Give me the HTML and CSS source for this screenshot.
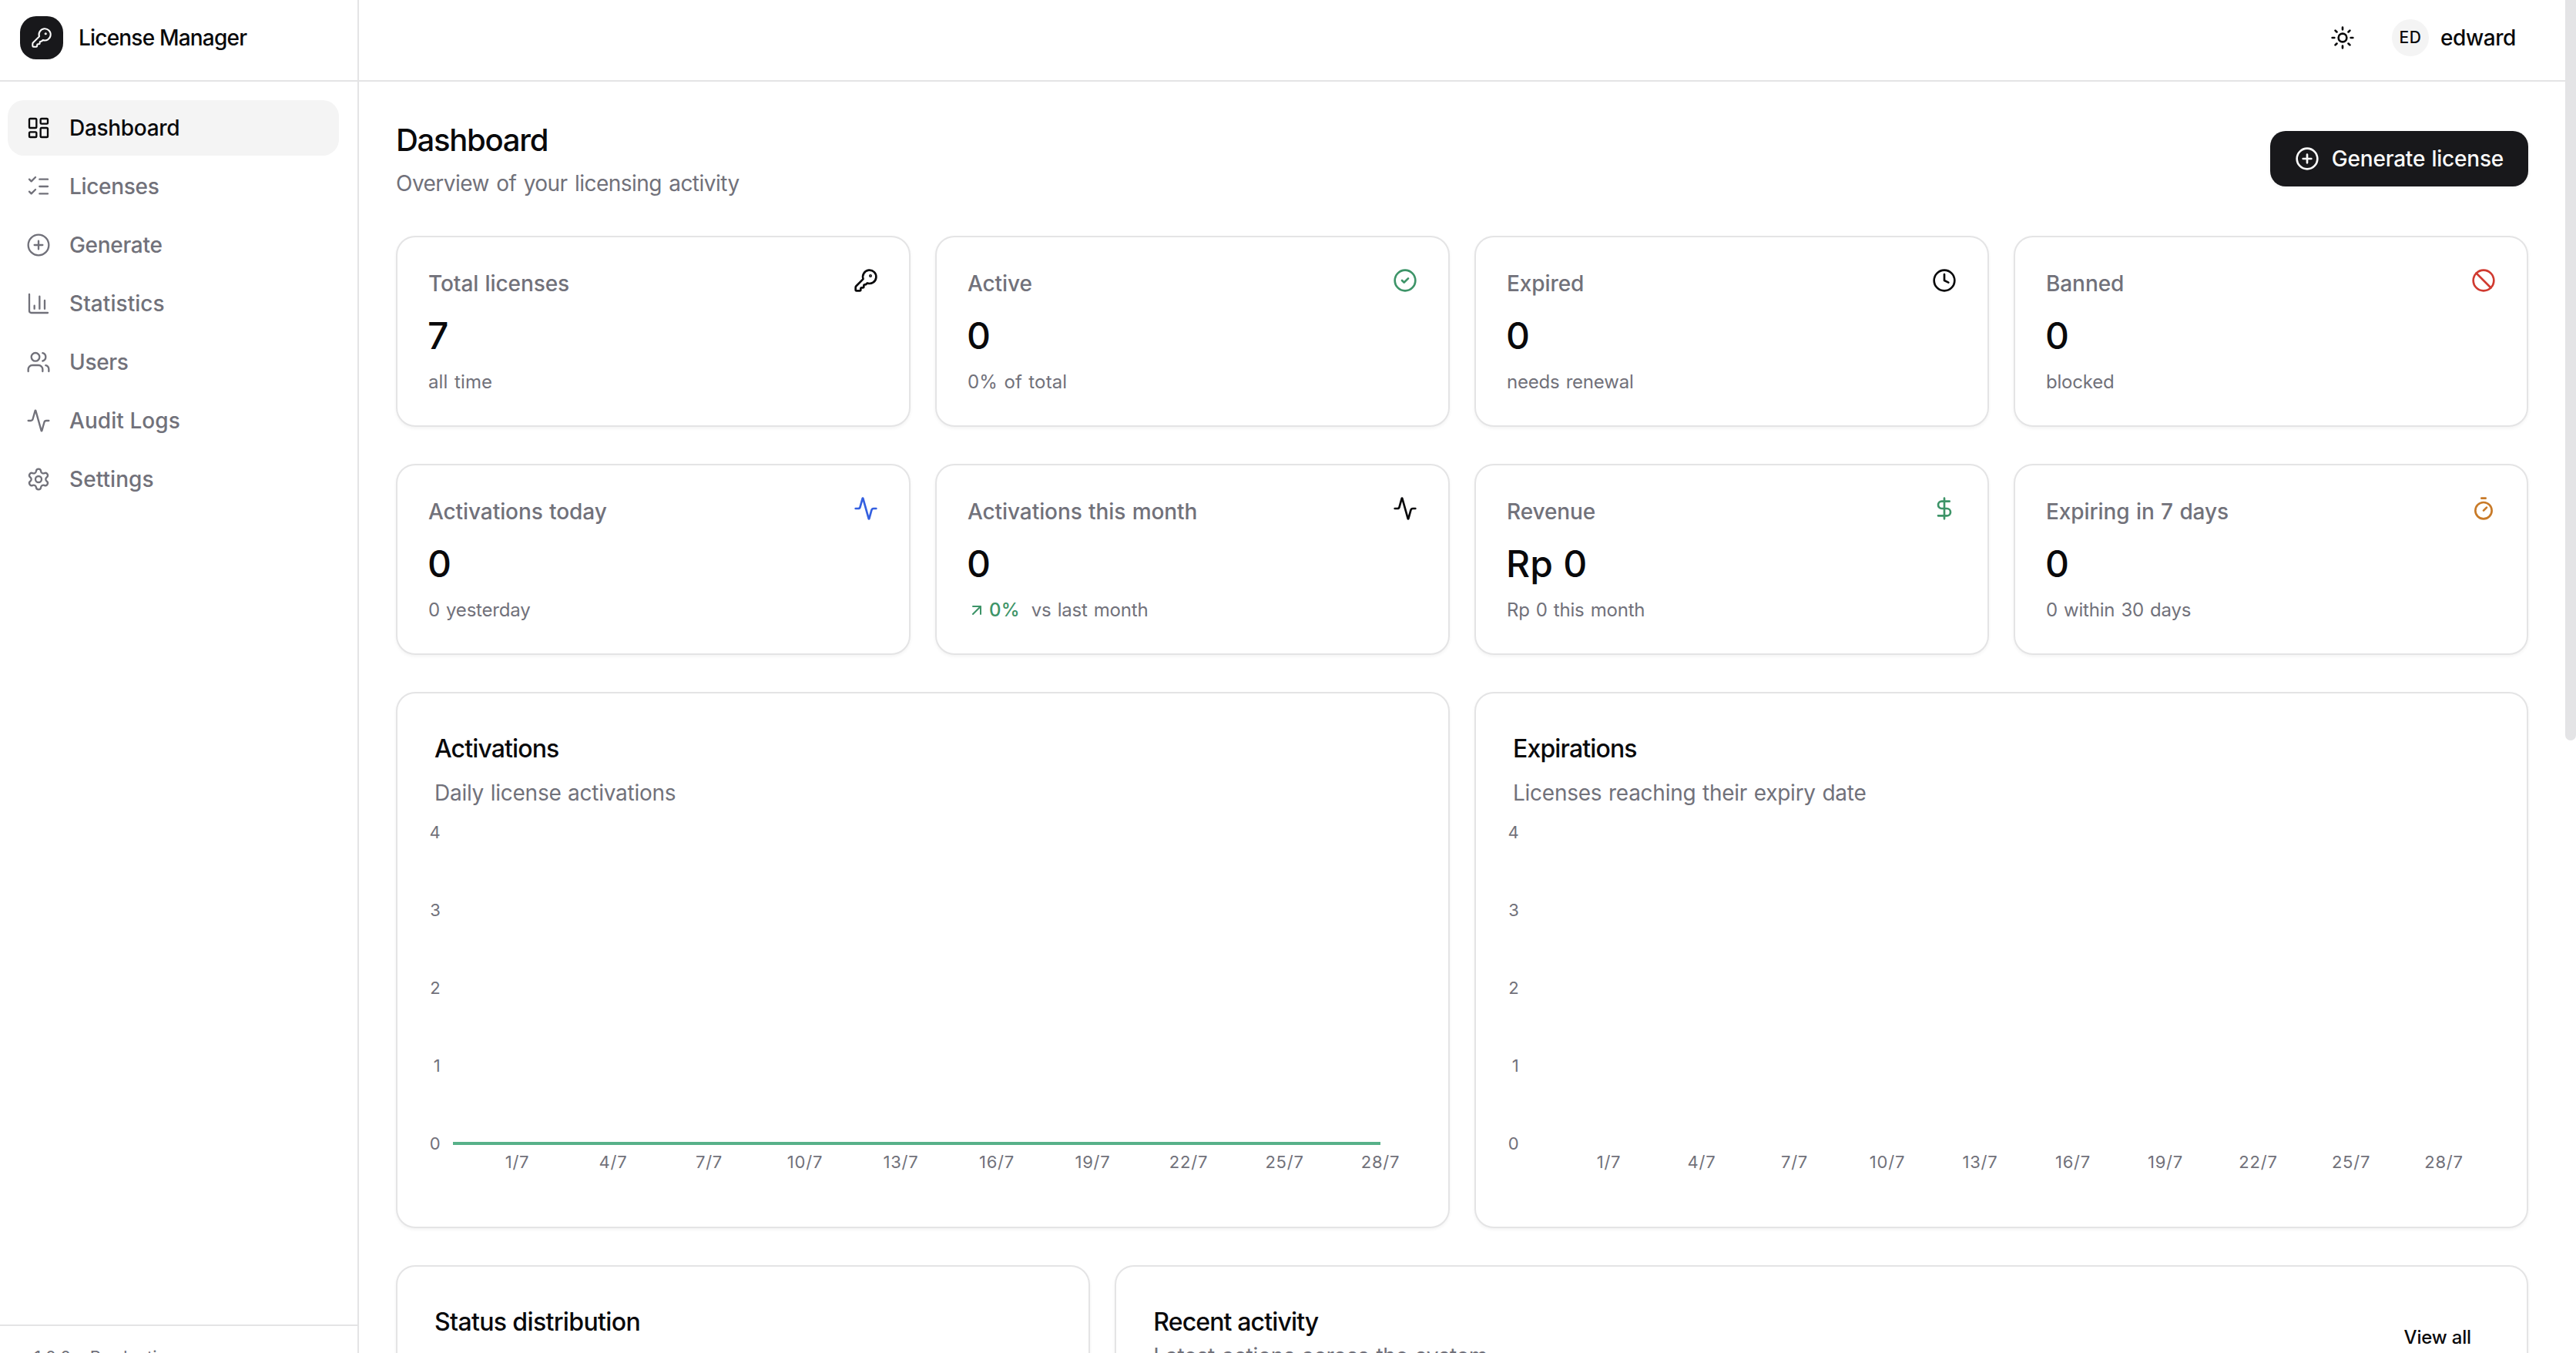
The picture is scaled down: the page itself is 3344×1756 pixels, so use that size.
FILE: index.html
```
<!DOCTYPE html>
<html lang="en">
<head>
<meta charset="utf-8">
<title>License Manager</title>
<link rel="stylesheet" href="styles.css">
</head>
<body>
<svg class="sprite" aria-hidden="true">
  <symbol id="key" viewBox="0 0 24 24"><path d="M2.586 17.414A2 2 0 0 0 2 18.828V21a1 1 0 0 0 1 1h3a1 1 0 0 0 1-1v-1a1 1 0 0 1 1-1h1a1 1 0 0 0 1-1v-1a1 1 0 0 1 1-1h.172a2 2 0 0 0 1.414-.586l.814-.814a6.5 6.5 0 1 0-4-4z"/><circle cx="16.5" cy="7.5" r=".5" fill="currentColor"/></symbol>
  <symbol id="dashboard" viewBox="0 0 24 24"><rect x="3" y="3" width="7" height="9" rx="1"/><rect x="14" y="3" width="7" height="5" rx="1"/><rect x="14" y="12" width="7" height="9" rx="1"/><rect x="3" y="16" width="7" height="5" rx="1"/></symbol>
  <symbol id="list" viewBox="0 0 24 24"><path d="M13 5h8M13 12h8M13 19h8M3 17l2 2 4-4M3 5l2 2 4-4"/></symbol>
  <symbol id="plus" viewBox="0 0 24 24"><circle cx="12" cy="12" r="10"/><path d="M8 12h8M12 8v8"/></symbol>
  <symbol id="chart" viewBox="0 0 24 24"><path d="M3 3v16a2 2 0 0 0 2 2h16M18 17V9M13 17V5M8 17v-3"/></symbol>
  <symbol id="users" viewBox="0 0 24 24"><path d="M16 21v-2a4 4 0 0 0-4-4H6a4 4 0 0 0-4 4v2M16 3.128a4 4 0 0 1 0 7.744M22 21v-2a4 4 0 0 0-3-3.87"/><circle cx="9" cy="7" r="4"/></symbol>
  <symbol id="activity" viewBox="0 0 24 24"><path d="M22 12h-2.48a2 2 0 0 0-1.93 1.46l-2.35 8.36a.25.25 0 0 1-.48 0L9.24 2.18a.25.25 0 0 0-.48 0l-2.35 8.36A2 2 0 0 1 4.49 12H2"/></symbol>
  <symbol id="settings" viewBox="0 0 24 24"><path d="M9.671 4.136a2.34 2.34 0 0 1 4.659 0 2.34 2.34 0 0 0 3.319 1.915 2.34 2.34 0 0 1 2.33 4.033 2.34 2.34 0 0 0 0 3.831 2.34 2.34 0 0 1-2.33 4.033 2.34 2.34 0 0 0-3.319 1.915 2.34 2.34 0 0 1-4.659 0 2.34 2.34 0 0 0-3.32-1.915 2.34 2.34 0 0 1-2.33-4.033 2.34 2.34 0 0 0 0-3.831A2.34 2.34 0 0 1 6.35 6.051a2.34 2.34 0 0 0 3.319-1.915"/><circle cx="12" cy="12" r="3"/></symbol>
  <symbol id="sun" viewBox="0 0 24 24"><circle cx="12" cy="12" r="4"/><path d="M12 2v2M12 20v2M4.93 4.93l1.41 1.41M17.66 17.66l1.41 1.41M2 12h2M20 12h2M6.34 17.66l-1.41 1.41M19.07 4.93l-1.41 1.41"/></symbol>
  <symbol id="check" viewBox="0 0 24 24"><circle cx="12" cy="12" r="10"/><path d="m9 12 2 2 4-4"/></symbol>
  <symbol id="clock" viewBox="0 0 24 24"><circle cx="12" cy="12" r="10"/><path d="M12 6v6l4 2"/></symbol>
  <symbol id="ban" viewBox="0 0 24 24"><circle cx="12" cy="12" r="10"/><path d="m4.9 4.9 14.2 14.2"/></symbol>
  <symbol id="dollar" viewBox="0 0 24 24"><path d="M12 2v20M17 5H9.5a3.5 3.5 0 0 0 0 7h5a3.5 3.5 0 0 1 0 7H6"/></symbol>
  <symbol id="timer" viewBox="0 0 24 24"><path d="M10 2h4M12 14l3-3"/><circle cx="12" cy="14" r="8"/></symbol>
  <symbol id="up-right" viewBox="0 0 24 24"><path d="M7 7h10v10M7 17 17 7"/></symbol>
</svg>

<div class="app">
  <aside class="sidebar">
    <div class="brand">
      <span class="brand-mark"><svg class="icon icon-brand"><use href="#key"/></svg></span>
      <span class="brand-name">License Manager</span>
    </div>
    <nav class="nav">
      <a class="nav-item active"><svg class="icon"><use href="#dashboard"/></svg>Dashboard</a>
      <a class="nav-item"><svg class="icon"><use href="#list"/></svg>Licenses</a>
      <a class="nav-item"><svg class="icon"><use href="#plus"/></svg>Generate</a>
      <a class="nav-item loose"><svg class="icon"><use href="#chart"/></svg>Statistics</a>
      <a class="nav-item"><svg class="icon"><use href="#users"/></svg>Users</a>
      <a class="nav-item loose"><svg class="icon"><use href="#activity"/></svg>Audit Logs</a>
      <a class="nav-item loose"><svg class="icon"><use href="#settings"/></svg>Settings</a>
    </nav>
    <div class="sidebar-footer">v1.0.0 · Production</div>
  </aside>

  <div class="main">
    <header class="topbar">
      <svg class="icon"><use href="#sun"/></svg>
      <div class="user"><span class="avatar">ED</span><span class="user-name">edward</span></div>
    </header>

    <main class="content">
      <div class="page-head">
        <div>
          <h1 class="page-title">Dashboard</h1>
          <p class="page-sub">Overview of your licensing activity</p>
        </div>
        <button class="primary"><svg class="icon"><use href="#plus"/></svg>Generate license</button>
      </div>

      <section class="stats">
        <article class="card stat"><div><p class="label">Total licenses</p><p class="value">7</p><p class="hint wide">all time</p></div><svg class="icon"><use href="#key"/></svg></article>
        <article class="card stat"><div><p class="label">Active</p><p class="value">0</p><p class="hint wide">0% of total</p></div><svg class="icon green"><use href="#check"/></svg></article>
        <article class="card stat"><div><p class="label">Expired</p><p class="value">0</p><p class="hint">needs renewal</p></div><svg class="icon"><use href="#clock"/></svg></article>
        <article class="card stat"><div><p class="label">Banned</p><p class="value">0</p><p class="hint">blocked</p></div><svg class="icon red"><use href="#ban"/></svg></article>
        <article class="card stat"><div><p class="label">Activations today</p><p class="value">0</p><p class="hint">0 yesterday</p></div><svg class="icon blue"><use href="#activity"/></svg></article>
        <article class="card stat"><div><p class="label">Activations this month</p><p class="value">0</p><p class="hint trend-row"><span class="trend green"><svg class="icon icon-trend"><use href="#up-right"/></svg>0%</span>vs last month</p></div><svg class="icon"><use href="#activity"/></svg></article>
        <article class="card stat"><div><p class="label">Revenue</p><p class="value">Rp 0</p><p class="hint">Rp 0 this month</p></div><svg class="icon green"><use href="#dollar"/></svg></article>
        <article class="card stat"><div><p class="label">Expiring in 7 days</p><p class="value">0</p><p class="hint">0 within 30 days</p></div><svg class="icon orange"><use href="#timer"/></svg></article>
      </section>

      <section class="charts">
        <article class="card chart-card">
          <h2 class="card-title">Activations</h2>
          <p class="card-sub">Daily license activations</p>
          <svg class="chart" viewBox="0 0 1364 495">
            <g text-anchor="end">
              <text x="56.5" y="39">4</text><text x="56.5" y="140">3</text><text x="56.5" y="241">2</text><text x="56.5" y="342">1</text><text x="56.5" y="443">0</text>
            </g>
            <path class="series" d="M72 435H1276"/>
            <g text-anchor="middle">
              <text x="155.5" y="467">1/7</text><text x="280" y="467">4/7</text><text x="404.5" y="467">7/7</text><text x="529" y="467">10/7</text><text x="653.5" y="467">13/7</text><text x="778" y="467">16/7</text><text x="902.5" y="467">19/7</text><text x="1027" y="467">22/7</text><text x="1151.5" y="467">25/7</text><text x="1276" y="467">28/7</text>
            </g>
          </svg>
        </article>
        <article class="card chart-card">
          <h2 class="card-title">Expirations</h2>
          <p class="card-sub">Licenses reaching their expiry date</p>
          <svg class="chart" viewBox="0 0 1364 495">
            <g text-anchor="end">
              <text x="56.5" y="39">4</text><text x="56.5" y="140">3</text><text x="56.5" y="241">2</text><text x="56.5" y="342">1</text><text x="56.5" y="443">0</text>
            </g>
            <g text-anchor="middle">
              <text x="172.5" y="467">1/7</text><text x="293" y="467">4/7</text><text x="413.5" y="467">7/7</text><text x="534" y="467">10/7</text><text x="654.5" y="467">13/7</text><text x="775" y="467">16/7</text><text x="895" y="467">19/7</text><text x="1015.5" y="467">22/7</text><text x="1136" y="467">25/7</text><text x="1256.5" y="467">28/7</text>
            </g>
          </svg>
        </article>
      </section>

      <section class="bottom">
        <article class="card panel">
          <div>
            <h2 class="card-title status-title">Status distribution</h2>
          </div>
        </article>
        <article class="card panel">
          <div>
            <h2 class="card-title">Recent activity</h2>
            <p class="card-sub tight">Latest actions across the system</p>
          </div>
          <a class="view-all">View all</a>
        </article>
      </section>
    </main>
  </div>
  <div class="scroll-thumb"></div>
</div>
</body>
</html>
```
FILE: styles.css
```
*{box-sizing:border-box}
html,body{margin:0;height:1756px;overflow:hidden}
body{background:#fff;color:#09090b;font-family:Inter,"Liberation Sans",sans-serif;font-size:28px;line-height:40px}
h1,h2,p{margin:0}
.sprite{position:absolute;width:0;height:0}
.icon{width:32px;height:32px;flex:none;fill:none;stroke:currentColor;stroke-width:2;stroke-linecap:round;stroke-linejoin:round}
.green{color:#3d9468}
.red{color:#d03a30}
.blue{color:#3460e0}
.orange{color:#c87a28}

.app{display:flex;width:3344px;height:1756px;overflow:hidden}
.sidebar{width:466px;height:1802px;flex:none;display:flex;flex-direction:column;border-right:2px solid #e4e4e5}
.brand{height:106px;padding:0 26px 6px;display:flex;align-items:center;gap:20px;border-bottom:2px solid #e4e4e5}
.brand-mark{width:56px;height:56px;border-radius:21px;background:#18181b;color:#fff;display:flex;align-items:center;justify-content:center}
.icon-brand{width:28px;height:28px;stroke-width:1.75}
.brand-name{font-weight:550;letter-spacing:-.0285em}
.nav{flex:1;display:flex;flex-direction:column;gap:4px;padding:24px 24px 0 10px}
.nav-item{height:72px;padding-left:24px;display:flex;align-items:center;gap:24px;border-radius:21px;color:#71717a;font-weight:500;letter-spacing:-.011em}
.nav-item.loose{letter-spacing:.002em}
.nav-item .icon{stroke-width:1.75}
.nav-item.active{background:#f4f4f4;color:#09090b}
.sidebar-footer{border-top:2px solid #e4e4e5;padding:24px 32px;height:83px;font-size:22px;line-height:32px;word-spacing:3px;color:#71717a}

.main{flex:1;min-width:0;height:1802px;margin-right:14px;display:flex;flex-direction:column}
.topbar{height:106px;flex:none;padding:0 64px 6px 0;display:flex;align-items:center;justify-content:flex-end;gap:48px;border-bottom:2px solid #e4e4e5}
.user{display:flex;align-items:center;gap:15px;font-weight:500;letter-spacing:-.015em}
.avatar{width:48px;height:48px;border-radius:50%;background:#f4f4f4;display:flex;align-items:center;justify-content:center;font-size:21px;letter-spacing:.03em}
.content{padding:48px;display:flex;flex-direction:column;gap:48px}
.page-head{height:104px;display:flex;align-items:center;justify-content:space-between}
.page-title{font-size:40px;line-height:56px;font-weight:550;letter-spacing:-.032em}
.page-sub{margin-top:8px;color:#71717a;letter-spacing:-.019em;word-spacing:2px}
.primary{height:72px;padding:0 32px;border:0;border-radius:20px;background:#18181b;color:#fafafa;display:flex;align-items:center;gap:16px;font:500 28px/40px Inter,"Liberation Sans",sans-serif;letter-spacing:-.0075em;word-spacing:1px;box-shadow:0 2px 4px rgba(0,0,0,.05)}

.card{background:#fff;border:2px solid #e4e4e5;border-radius:25px;box-shadow:0 2px 4px rgba(0,0,0,.05)}
.stats{display:grid;grid-template-columns:repeat(4,1fr);grid-auto-rows:248px;gap:48px 32px}
.stat{padding:40px;display:flex;justify-content:space-between;align-items:flex-start}
.label{color:#71717a;font-weight:500;letter-spacing:-.003em;word-spacing:1px}
.value{padding-top:2px;margin-left:-1px;font-size:48px;line-height:92px;font-weight:550;letter-spacing:.004em}
.hint{font-size:24px;line-height:29px;margin-top:-1px;color:#71717a;letter-spacing:-.008em;word-spacing:1.5px}
.hint.wide{letter-spacing:.006em}
.trend-row{display:flex;align-items:center;gap:15px}
.trend{display:flex;align-items:center;gap:4px;font-weight:500;letter-spacing:.01em}
.icon-trend{width:24px;height:24px}

.charts{display:grid;grid-template-columns:1fr 1fr;gap:32px}
.chart-card{height:696px;padding-top:48px;display:flex;flex-direction:column}
.card-title{font-size:32px;line-height:48px;font-weight:550;letter-spacing:-.027em}
.status-title{letter-spacing:-.02em}
.card-sub{color:#71717a;letter-spacing:-.009em;word-spacing:1px;margin-top:13px}
.card-sub.tight{margin-top:0;letter-spacing:-.006em;word-spacing:1.5px}
.chart-card .card-title,.chart-card .card-sub{padding-left:48px}
.chart{display:block;width:1364px;height:495px;font-size:22px;letter-spacing:.035em;fill:#71717a}
.series{stroke:#57b189;stroke-width:4;fill:none}
.bottom{display:grid;grid-template-columns:901.33px 1fr;gap:32px}
.panel{height:600px;padding:48px;display:flex;justify-content:space-between;align-items:flex-start}
.view-all{margin-top:24px;padding-right:24px;font-size:24px;font-weight:500;letter-spacing:-.007em}

.scroll-thumb{position:absolute;top:0;right:0;width:14px;height:961px;background:#e4e4e6;border-radius:0 0 7px 7px}
```
